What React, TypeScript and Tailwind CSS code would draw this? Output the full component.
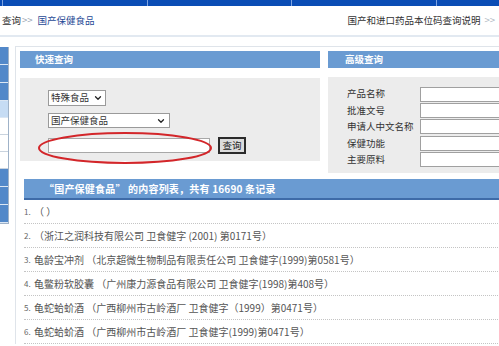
import { ChevronDown } from "lucide-react";

const SIDE = ["b", "b", "b", "s", "w", "w", "w", "b", "b", "b"];

const ADV = ["产品名称", "批准文号", "申请人中文名称", "保健功能", "主要原料"];

const ROWS = [
  { n: "1.", t: "（ ）" },
  { n: "2.", t: "（浙江之润科技有限公司  卫食健字 (2001) 第0171号）" },
  { n: "3.", t: "龟龄宝冲剂 （北京超微生物制品有限责任公司  卫食健字(1999)第0581号）" },
  { n: "4.", t: "龟鳖粉软胶囊 （广州康力源食品有限公司  卫食健字(1998)第408号）" },
  { n: "5.", t: "龟蛇蛤蚧酒 （广西柳州市古岭酒厂  卫食健字（1999）第0471号）" },
  { n: "6.", t: "龟蛇蛤蚧酒 （广西柳州市古岭酒厂  卫食健字(1999)第0471号）" },
];

export default function App() {
  return (
    <div className="h-[346px] w-[499px] overflow-hidden bg-white font-['Noto_Sans_CJK_SC',sans-serif] text-[9.5px] leading-none text-[#333]">
      <div className="w-[580px]">
        {/* nav strip */}
        <div className="flex h-[6px] bg-[#0b4db5] pl-[2px]">
          {[0, 1, 2, 3].map((i) => (
            <div key={i} className="h-full w-[155px] border-l border-[#7ea3e0]" />
          ))}
        </div>

        {/* breadcrumb */}
        <div className="flex h-[31px] w-[499px] items-center justify-between border-b-2 border-[#e2e9f1]">
          <div className="ml-[2px] flex items-center">
            <span>查询</span>
            <span className="ml-px text-[#9aa6b4]">&gt;&gt;</span>
            <span className="ml-[5px] text-[#1f4a96]">国产保健食品</span>
          </div>
          <div className="mr-[4px] flex items-center">
            <span>国产和进口药品本位码查询说明</span>
            <span className="ml-[4px] text-[#b0b8c2]">&gt;&gt;</span>
          </div>
        </div>

        <div className="mt-[9px] flex items-start gap-[6px]">
          {/* side menu */}
          <div className="mt-px flex w-[9px] flex-col border-r border-b border-[#9fb2c8]">
            {SIDE.map((c, i) => (
              <div
                key={i}
                className={
                  c === "b"
                    ? "h-[18px] border-b border-[#dbe6f3] bg-[#5288c9]"
                    : c === "s"
                      ? "h-[17px] border-b border-[#dbe6f3] bg-[#c6dcf4]"
                      : "h-[17px] border-b border-[#c9d3de] bg-white"
                }
              />
            ))}
          </div>

          {/* main */}
          <div className="flex-1 border-t border-l border-[#dfe4ea] pt-[4px] pl-[4px]">
            <div className="flex items-start gap-[8px]">
              {/* quick query */}
              <div className="w-[300px]">
                <div className="flex h-[17px] items-center bg-[#6a9bd2] pl-[15px] font-bold text-white">
                  快速查询
                </div>
                <div className="relative mt-[10px] h-[83px] bg-[#ececec] pt-[12px] pl-[28px]">
                  <div className="flex h-[16px] w-[58px] items-center justify-between border border-[#9a9a9a] bg-white pr-[2px] pl-[2px]">
                    <span>特殊食品</span>
                    <ChevronDown size={10} strokeWidth={3} className="text-[#222]" />
                  </div>
                  <div className="mt-[7px] flex h-[15px] w-[122px] items-center justify-between border border-[#9a9a9a] bg-white pr-[3px] pl-[2px]">
                    <span>国产保健食品</span>
                    <ChevronDown size={10} strokeWidth={3} className="text-[#222]" />
                  </div>
                  <div className="mt-[9px] flex items-center">
                    <div className="h-[15px] w-[162px] border border-[#a8a8a8] bg-white" />
                    <button className="ml-[8px] flex h-[17px] w-[28px] items-center justify-center border-2 border-[#2b2b2b] bg-[#dcdcdc] text-[9.5px] text-[#222]">
                      查询
                    </button>
                  </div>
                  <svg
                    className="absolute top-[53px] left-[17px]"
                    width="176"
                    height="34"
                    viewBox="0 0 176 34"
                  >
                    <ellipse cx="88" cy="17" rx="86" ry="15" fill="none" stroke="#d3262a" strokeWidth="2" />
                  </svg>
                </div>
              </div>

              {/* advanced query */}
              <div className="w-[220px]">
                <div className="flex h-[17px] items-center bg-[#6a9bd2] pl-[17px] font-bold text-white">
                  高级查询
                </div>
                <div className="mt-[9px] h-[96px] bg-[#ececec] pt-[9px] pl-[19px]">
                  {ADV.map((l) => (
                    <div key={l} className="flex h-[16.4px] items-center">
                      <span className="w-[73px]">{l}</span>
                      <div className="h-[15px] w-[110px] border border-[#a0a0a0] bg-white" />
                    </div>
                  ))}
                </div>
              </div>
            </div>

            {/* result list */}
            <div className="mt-[6px] ml-[4px]">
              <div className="flex h-[21px] items-center border-b-2 border-[#3e6ba8] bg-[#6a9bd2] pl-[20px] text-[10px] font-bold tracking-[0.2px] text-white">
                “国产保健食品” 的内容列表，共有 16690 条记录
              </div>
              {ROWS.map((r) => (
                <div
                  key={r.n}
                  className="flex h-[24px] items-center border-b border-dotted border-[#c4c4c4] text-[10px] text-[#555]"
                >
                  <span className="w-[10px] text-[8px] text-[#666]">{r.n}</span>
                  <span>{r.t}</span>
                </div>
              ))}
            </div>
          </div>
        </div>
      </div>
    </div>
  );
}
